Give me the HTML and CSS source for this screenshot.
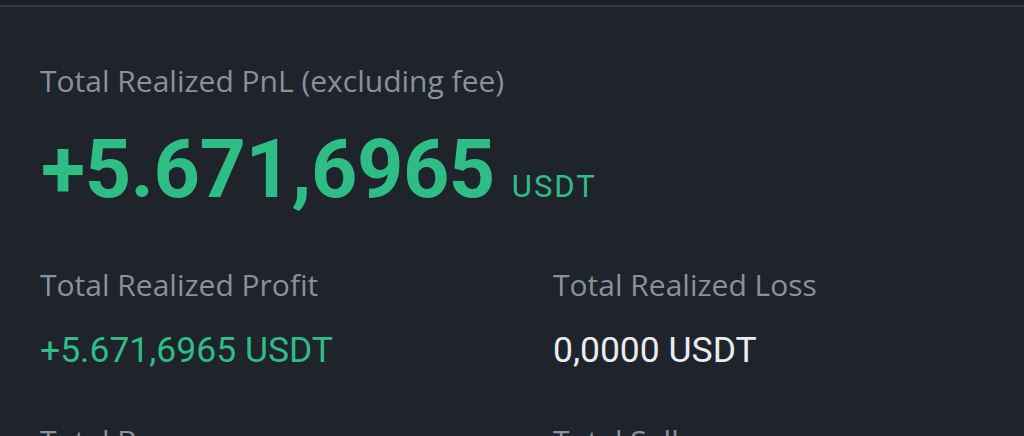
FILE: index.html
```html
<!DOCTYPE html>
<html>
<head>
<meta charset="utf-8">
<link rel="stylesheet" href="styles.css">
</head>
<body>
<div class="topbar"></div>
<main class="panel">
  <div class="title">Total Realized PnL (excluding fee)</div>
  <div class="total"><span class="total-num">+5.671,6965</span><span class="total-unit">USDT</span></div>
  <div class="grid">
    <div class="cell">
      <div class="label">Total Realized Profit</div>
      <div class="value green">+5.671,6965 USDT</div>
    </div>
    <div class="cell">
      <div class="label">Total Realized Loss</div>
      <div class="value white">0,0000 USDT</div>
    </div>
    <div class="cell">
      <div class="label">Total Buys</div>
      <div class="value green">0</div>
    </div>
    <div class="cell">
      <div class="label">Total Sells</div>
      <div class="value white">0</div>
    </div>
  </div>
</main>
</body>
</html>
```
FILE: styles.css
```css
html, body {
  margin: 0;
  padding: 0;
  background: #1f232c;
  overflow: hidden;
}
body {
  font-family: "Open Sans", "Noto Sans", sans-serif;
}
.topbar {
  height: 5px;
  background: #1b1f27;
  border-bottom: 2px solid #373c45;
}
.panel {
  padding: 56px 40px 0 40px;
}
.title {
  font-size: 30px;
  line-height: 36px;
  color: #8a919c;
}
.total {
  margin-top: 31px;
  display: flex;
  align-items: baseline;
  color: #2ebd85;
}
.total-num {
  font-family: "Roboto", sans-serif;
  font-weight: 700;
  font-size: 81px;
  line-height: 80px;
  letter-spacing: -0.5px;
  margin-left: 1px;
}
.total-unit {
  font-family: "Roboto", sans-serif;
  font-size: 31px;
  letter-spacing: 2px;
  margin-left: 17px;
}
.grid {
  display: grid;
  grid-template-columns: 513px 1fr;
  margin-top: 57px;
  row-gap: 53px;
}
.label {
  font-size: 30px;
  line-height: 36px;
  color: #8a919c;
}
.value {
  font-family: "Roboto", sans-serif;
  font-size: 35.5px;
  line-height: 40px;
  margin-top: 26.5px;
}
.green { color: #2ebd85; }
.white { color: #eaecef; }
```
